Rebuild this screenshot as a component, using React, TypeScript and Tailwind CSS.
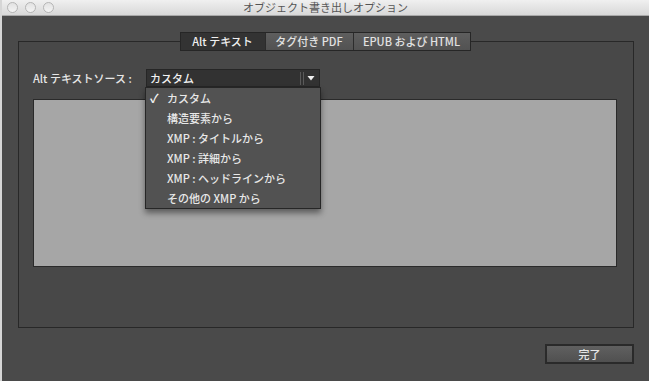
const FONT = "font-['Lucida_Grande','Noto_Sans_CJK_JP',sans-serif]";

const TABS = [
    { label: "Alt テキスト", width: "w-[84px]", active: true },
    { label: "タグ付き PDF", width: "w-[88px]", active: false },
    { label: "EPUB および HTML", width: "w-[117px]", active: false },
];

const MENU_ITEMS = [
    { label: "カスタム", checked: true },
    { label: "構造要素から", checked: false },
    { label: "XMP : タイトルから", checked: false },
    { label: "XMP : 詳細から", checked: false },
    { label: "XMP : ヘッドラインから", checked: false },
    { label: "その他の XMP から", checked: false },
];

function TrafficLight() {
    return <span className="h-[11px] w-[11px] rounded-full border border-[#b5b5b5] bg-gradient-to-b from-[#e2e2e2] to-[#f4f4f4]" />;
}

export default function App() {
    return (
        <div
            className={`relative flex h-[381px] w-[649px] flex-col overflow-hidden border-l-2 border-[#d6d6d6] bg-[#4a4a4a] ${FONT}`}
        >
            {/* title bar */}
            <div className="relative flex h-[16px] shrink-0 items-center border-b border-[#a8a8a8] bg-gradient-to-b from-[#f0f0f0] to-[#d8d8d8]">
                <div className="flex items-center gap-[7px] pl-[5px]">
                    <TrafficLight />
                    <TrafficLight />
                    <TrafficLight />
                </div>
                <div className="absolute inset-x-0 top-0 flex h-full items-center justify-center text-[11px] leading-none text-[#555]">
                    オブジェクト書き出しオプション
                </div>
            </div>

            <div className="flex flex-1 flex-col pl-[16px] pr-[15px] pt-[25px]">
                {/* group box */}
                <div className="flex h-[287px] flex-col border border-[#282828] bg-[#484848] pl-[14px] pr-[16px]">
                    <div className="-mt-[10px] flex justify-center">
                        <div className="flex h-[19px] border border-[#262626] bg-[#262626]">
                            {TABS.map((tab, index) => (
                                <div
                                    key={tab.label}
                                    className={`flex ${tab.width} items-center justify-center text-[11px] font-medium leading-none ${
                                        tab.active
                                            ? "bg-[#333333] text-[#f0f0f0]"
                                            : "bg-gradient-to-b from-[#5e5e5e] to-[#525252] text-[#e2e2e2]"
                                    } ${index > 0 ? "border-l border-[#2c2c2c]" : ""}`}
                                >
                                    {tab.label}
                                </div>
                            ))}
                        </div>
                    </div>

                    <div className="mt-[18px] flex items-center">
                        <span className="w-[113px] text-[11px] font-medium leading-none text-[#e6e6e6]">
                            Alt テキストソース :
                        </span>
                        <div className="relative">
                            <div className="flex h-[18px] w-[174px] items-center border border-[#262626] bg-[#323232] pl-[3px] text-[11px] font-medium text-[#f2f2f2]">
                                <span className="flex-1 leading-none">カスタム</span>
                                <span className="mr-[2px] h-[13px] w-[4px] border-x border-[#5a5a5a]" />
                                <svg width="10" height="10" viewBox="0 0 10 10" className="mr-[3px]">
                                    <path d="M1.5 3 L8.5 3 L5 7.5 Z" fill="#f0f0f0" />
                                </svg>
                            </div>

                            {/* dropdown menu */}
                            <div className="absolute left-[-1px] top-[18px] z-10 w-[176px] border border-[#262626] bg-[#525252] shadow-[0_4px_6px_rgba(0,0,0,0.45)]">
                                {MENU_ITEMS.map((item) => (
                                    <div key={item.label} className="flex h-[20px] items-center text-[11px] font-medium leading-none text-[#e8e8e8]">
                                        <span className="w-[21px] pl-[4px] text-[12px] font-bold text-[#f2f2f2]">{item.checked ? "✓" : ""}</span>
                                        <span>{item.label}</span>
                                    </div>
                                ))}
                            </div>
                        </div>
                    </div>

                    <div className="mt-[12px] h-[168px] border border-[#2a2a2a] bg-[#a6a6a6]" />
                </div>

                <div className="mt-[16px] flex justify-end">
                    <button className="flex h-[20px] w-[89px] items-center justify-center border-2 border-[#2a2a2a] bg-gradient-to-b from-[#606060] to-[#505050] text-[11px] font-medium leading-none text-[#e6e6e6]">
                        完了
                    </button>
                </div>
            </div>
        </div>
    );
}
